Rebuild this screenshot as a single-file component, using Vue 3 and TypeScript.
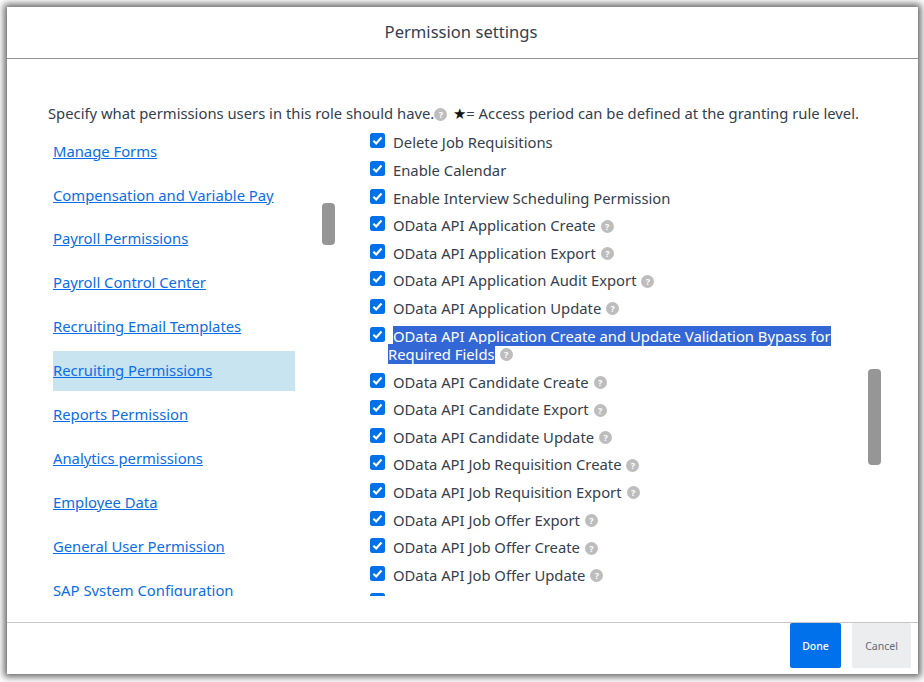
<script setup lang="ts">
const links: string[] = [
  'Manage Forms',
  'Compensation and Variable Pay',
  'Payroll Permissions',
  'Payroll Control Center',
  'Recruiting Email Templates',
  'Recruiting Permissions',
  'Reports Permission',
  'Analytics permissions',
  'Employee Data',
  'General User Permission',
  'SAP System Configuration',
]
const perms: { label: string; help: boolean; sel?: boolean }[] = [
  { label: 'Delete Job Requisitions', help: false },
  { label: 'Enable Calendar', help: false },
  { label: 'Enable Interview Scheduling Permission', help: false },
  { label: 'OData API Application Create', help: true },
  { label: 'OData API Application Export', help: true },
  { label: 'OData API Application Audit Export', help: true },
  { label: 'OData API Application Update', help: true },
  { label: 'OData API Application Create and Update Validation Bypass for Required Fields', help: true, sel: true },
  { label: 'OData API Candidate Create', help: true },
  { label: 'OData API Candidate Export', help: true },
  { label: 'OData API Candidate Update', help: true },
  { label: 'OData API Job Requisition Create', help: true },
  { label: 'OData API Job Requisition Export', help: true },
  { label: 'OData API Job Offer Export', help: true },
  { label: 'OData API Job Offer Create', help: true },
  { label: 'OData API Job Offer Update', help: true },
  { label: '', help: false },
]
</script>

<template>
  <div class="page">
    <div class="dialog">
      <header class="head">Permission settings</header>
      <main class="body">
        <p class="intro">Specify what permissions users in this role should have.<span class="help intro-help">?</span><span class="star">★</span>= Access period can be defined at the granting rule level.</p>
        <div class="cols">
          <nav class="nav">
            <div v-for="(l, i) in links" :key="l" class="nav-item" :class="{ active: i === 5 }"><a href="#" class="link">{{ l }}</a></div>
            <span class="thumb nav-thumb"></span>
          </nav>
          <div class="list">
            <label v-for="(p, i) in perms" :key="i" class="row" :class="{ tall: p.sel }">
              <span class="box">
                <svg viewBox="0 0 15 15" width="15" height="15"><rect width="15" height="15" rx="2.5" fill="#0071eb"/><path d="M3.4 7.7l2.8 2.8 5.3-6" fill="none" stroke="#fff" stroke-width="2.2"/></svg>
              </span>
              <span class="label" :class="{ wrapped: p.sel }"><span :class="{ sel: p.sel }">{{ p.label }}</span><span v-if="p.help" class="help">?</span></span>
            </label>
            <span class="thumb list-thumb"></span>
          </div>
        </div>
      </main>
      <footer class="foot">
        <button class="btn done">Done</button>
        <button class="btn cancel">Cancel</button>
      </footer>
    </div>
  </div>
</template>

<style>
html, body { margin: 0; background: #fff; }
</style>

<style scoped>
.page {
  width: 924px;
  height: 682px;
  box-sizing: border-box;
  padding: 7px 6px 8px 7px;
  font-family: "Noto Sans", sans-serif;
  color: #34404e;
  overflow: hidden;
}
.dialog {
  height: 100%;
  display: flex;
  flex-direction: column;
  background: #fff;
  box-shadow: 0 0 7px 3px #666;
}
.head {
  height: 52px;
  flex: none;
  box-sizing: border-box;
  border-bottom: 1px solid #949494;
  display: flex;
  align-items: center;
  justify-content: center;
  font-size: 16.6px;
  padding: 0 3px 3px 0;
}
.body {
  flex: 1;
  min-height: 0;
  padding: 44px 0 0 41px;
  display: flex;
  flex-direction: column;
}
.intro {
  margin: 0;
  font-size: 14.8px;
  line-height: 20px;
  white-space: nowrap;
}
.star { margin-left: 6px; color: #111; }
.cols {
  display: flex;
  margin-top: 9px;
  height: 464px;
  overflow: hidden;
}
.nav {
  position: relative;
  width: 322px;
  flex: none;
}
.nav-item {
  width: 242px;
  height: 39.4px;
  margin: 0 0 4.5px 5px;
  display: flex;
  align-items: center;
  font-size: 14.8px;
  line-height: 20px;
}
.link { color: #0a6ee8; text-decoration: underline; margin-top: -2px; }
.nav-item.active { background: #c8e4f0; }
.list {
  position: relative;
  flex: 1;
  padding-top: 0.4px;
}
.row {
  display: flex;
  align-items: flex-start;
  min-height: 27.6px;
  font-size: 14.8px;
  line-height: 18px;
}
.row.tall { min-height: 46px; }
.box { width: 15px; height: 15px; margin-top: 1px; flex: none; display: block; }
.box svg { display: block; }
.label { margin-left: 8px; width: 450px; margin-top: 1px; }
.label.wrapped { margin-left: 3px; text-indent: 5px; }
.sel { background: #3367d6; color: #fff; }
.help {
  display: inline-block;
  width: 13px;
  height: 13px;
  margin-left: 5px;
  border-radius: 50%;
  background: #bdbdbd;
  color: #fff;
  font-size: 9px;
  line-height: 13px;
  font-weight: 700;
  text-align: center;
  text-indent: 0;
  vertical-align: 1.5px;
}
.intro-help { margin-left: 0; vertical-align: 1px; }
.thumb { position: absolute; background: #969696; border-radius: 4px; width: 13px; }
.nav-thumb { left: 274px; top: 71px; height: 42px; }
.list-thumb { left: 498px; top: 237px; height: 96px; }
.foot {
  height: 52px;
  flex: none;
  box-sizing: border-box;
  border-top: 1px solid #c6c6c6;
  display: flex;
  justify-content: flex-end;
  gap: 11px;
  padding: 0 7px 0 0;
}
.btn {
  height: 45px;
  border: none;
  border-radius: 2px;
  font-family: inherit;
  font-size: 10.5px;
  padding: 0;
}
.done { width: 51px; background: #0070eb; color: #fff; font-weight: 500; }
.cancel { width: 59px; background: #ebedef; color: #5f6b76; }
</style>
